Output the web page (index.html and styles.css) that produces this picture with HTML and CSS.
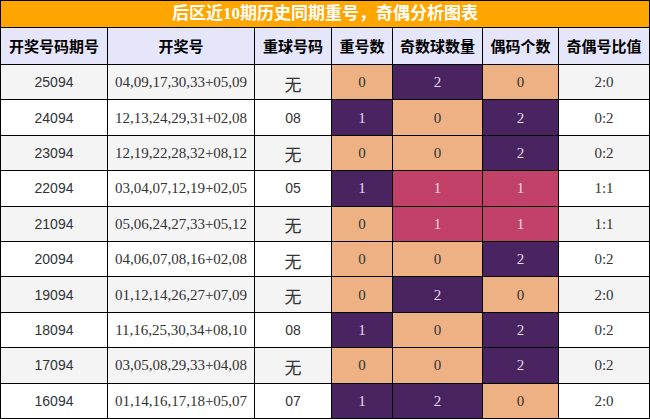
FILE: index.html
```html
<!DOCTYPE html>
<html lang="zh">
<head>
<meta charset="utf-8">
<title>后区近10期历史同期重号，奇偶分析图表</title>
<link rel="stylesheet" href="styles.css">
</head>
<body>
<table class="chart">
  <colgroup>
    <col class="c1"><col class="c2"><col class="c3"><col class="c4"><col class="c5"><col class="c6"><col class="c7">
  </colgroup>
  <thead>
    <tr class="title-row"><th colspan="7" class="title">后区近10期历史同期重号，奇偶分析图表</th></tr>
    <tr class="head-row">
      <th>开奖号码期号</th><th>开奖号</th><th>重球号码</th><th>重号数</th><th>奇数球数量</th><th>偶码个数</th><th>奇偶号比值</th>
    </tr>
  </thead>
  <tbody>
    <tr class="odd"><td class="issue">25094</td><td class="nums">04,09,17,30,33+05,09</td><td class="rep none">无</td><td class="peach">0</td><td class="purple">2</td><td class="peach">0</td><td class="ratio">2:0</td></tr>
    <tr><td class="issue">24094</td><td class="nums">12,13,24,29,31+02,08</td><td class="rep">08</td><td class="purple">1</td><td class="peach">0</td><td class="purple">2</td><td class="ratio">0:2</td></tr>
    <tr class="odd"><td class="issue">23094</td><td class="nums">12,19,22,28,32+08,12</td><td class="rep none">无</td><td class="peach">0</td><td class="peach">0</td><td class="purple">2</td><td class="ratio">0:2</td></tr>
    <tr><td class="issue">22094</td><td class="nums">03,04,07,12,19+02,05</td><td class="rep">05</td><td class="purple">1</td><td class="pink">1</td><td class="pink">1</td><td class="ratio">1:1</td></tr>
    <tr class="odd"><td class="issue">21094</td><td class="nums">05,06,24,27,33+05,12</td><td class="rep none">无</td><td class="peach">0</td><td class="pink">1</td><td class="pink">1</td><td class="ratio">1:1</td></tr>
    <tr><td class="issue">20094</td><td class="nums">04,06,07,08,16+02,08</td><td class="rep none">无</td><td class="peach">0</td><td class="peach">0</td><td class="purple">2</td><td class="ratio">0:2</td></tr>
    <tr class="odd"><td class="issue">19094</td><td class="nums">01,12,14,26,27+07,09</td><td class="rep none">无</td><td class="peach">0</td><td class="purple">2</td><td class="peach">0</td><td class="ratio">2:0</td></tr>
    <tr><td class="issue">18094</td><td class="nums">11,16,25,30,34+08,10</td><td class="rep">08</td><td class="purple">1</td><td class="peach">0</td><td class="purple">2</td><td class="ratio">0:2</td></tr>
    <tr class="odd"><td class="issue">17094</td><td class="nums">03,05,08,29,33+04,08</td><td class="rep none">无</td><td class="peach">0</td><td class="peach">0</td><td class="purple">2</td><td class="ratio">0:2</td></tr>
    <tr><td class="issue">16094</td><td class="nums">01,14,16,17,18+05,07</td><td class="rep">07</td><td class="purple">1</td><td class="purple">2</td><td class="peach">0</td><td class="ratio">2:0</td></tr>
  </tbody>
</table>
</body>
</html>
```

FILE: styles.css
```css
html, body {
  margin: 0;
  padding: 0;
  background: #ffffff;
}

.chart {
  width: 649px;
  border-collapse: collapse;
  table-layout: fixed;
  font-family: "Liberation Serif", "Noto Sans CJK SC", serif;
  color: #333333;
}

.c1 { width: 107px; }
.c2 { width: 147px; }
.c3 { width: 77px; }
.c4 { width: 61px; }
.c5 { width: 90px; }
.c6 { width: 76px; }
.c7 { width: 91px; }

.chart th,
.chart td {
  border: 1px solid #000000;
  padding: 0;
  text-align: center;
  vertical-align: middle;
}

.title-row { height: 27px; }
.title {
  background: #ffa500;
  color: #ffffff;
  font-size: 17px;
  font-weight: bold;
  font-family: "Liberation Serif", "Noto Sans CJK SC", serif;
  line-height: 20px;
}

.head-row { height: 37px; }
.head-row th {
  background: #e6e6fa;
  color: #000000;
  font-family: "Noto Sans CJK SC", sans-serif;
  font-size: 15px;
  font-weight: bold;
  line-height: 18px;
}

tbody tr { height: 35.4px; background: #ffffff; }
tbody tr.odd { background: #f4f4f4; }

tbody td {
  font-size: 15px;
  line-height: 18px;
}

.issue, .rep {
  font-family: "Liberation Sans", "Noto Sans CJK SC", sans-serif;
  font-size: 14px;
}

.rep.none {
  font-family: "Noto Sans CJK SC", sans-serif;
  font-size: 17px;
  padding-top: 3px;
}

.peach { background: #edb184; color: #333333; }
.purple { background: #4a2361; color: #e4dcea; }
.pink { background: #c14168; color: #f1d9e1; }
```
